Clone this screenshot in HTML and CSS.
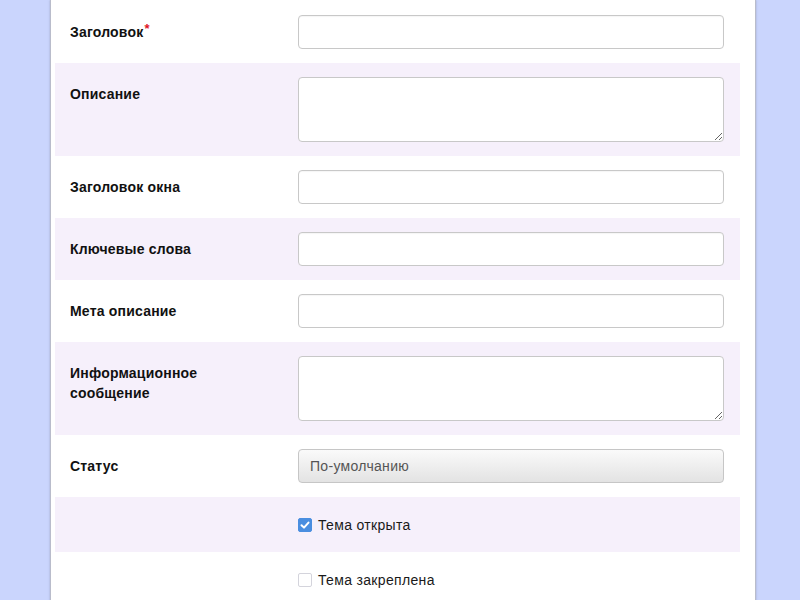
FILE: index.html
```html
<!DOCTYPE html>
<html lang="ru">
<head>
<meta charset="utf-8">
<link rel="stylesheet" href="styles.css">
</head>
<body>
<div class="page">
  <div class="panel">
    <form class="form">
      <div class="row">
        <div class="label">Заголовок<span class="req">*</span></div>
        <div class="field"><input class="input" type="text"></div>
      </div>
      <div class="row alt">
        <div class="label">Описание</div>
        <div class="field"><textarea class="textarea"></textarea></div>
      </div>
      <div class="row">
        <div class="label">Заголовок окна</div>
        <div class="field"><input class="input" type="text"></div>
      </div>
      <div class="row alt">
        <div class="label">Ключевые слова</div>
        <div class="field"><input class="input" type="text"></div>
      </div>
      <div class="row">
        <div class="label">Мета описание</div>
        <div class="field"><input class="input" type="text"></div>
      </div>
      <div class="row alt">
        <div class="label">Информационное<br>сообщение</div>
        <div class="field"><textarea class="textarea"></textarea></div>
      </div>
      <div class="row">
        <div class="label">Статус</div>
        <div class="field"><div class="select">По-умолчанию</div></div>
      </div>
      <div class="row alt check-row">
        <div class="label"></div>
        <div class="field">
          <label class="check"><span class="box checked"><svg viewBox="0 0 14 14" width="14" height="14"><path d="M3.5 7.2 L6 9.6 L10.5 4.6" fill="none" stroke="#fff" stroke-width="2" stroke-linecap="round" stroke-linejoin="round"/></svg></span>Тема открыта</label>
        </div>
      </div>
      <div class="row check-row">
        <div class="label"></div>
        <div class="field">
          <label class="check"><span class="box"></span>Тема закреплена</label>
        </div>
      </div>
    </form>
  </div>
</div>
</body>
</html>
```
FILE: styles.css
```css
* { box-sizing: border-box; }
html, body {
  margin: 0;
  padding: 0;
  height: 100%;
  overflow: hidden;
}
body {
  background: #cad5fd;
  font-family: "Liberation Sans", Arial, sans-serif;
  color: #111;
}
.page {
  display: flex;
  justify-content: flex-start;
  padding-left: 50px;
}
.panel {
  width: 706px;
  min-height: 600px;
  background: #fff;
  border-left: 1px solid #b9bccb;
  border-right: 1px solid #b9bccb;
  box-shadow: 0 0 2px rgba(120, 125, 150, 0.5);
  padding: 1px 15px 0 4px;
}
.form {
  display: flex;
  flex-direction: column;
}
.row {
  display: flex;
  align-items: flex-start;
  padding: 14px 15px;
}
.row.alt { background: #f6f0fb; }
.label {
  width: 228px;
  flex: none;
  font-size: 14px;
  font-weight: bold;
  line-height: 20px;
  padding-top: 7px;
  color: #111;
  letter-spacing: 0.2px;
}
.req {
  color: #e0141e;
  font-size: 13px;
  line-height: 0;
  vertical-align: 4px;
  margin-left: 1px;
}
.field { flex: 1; }
.input {
  display: block;
  width: 426px;
  height: 34px;
  border: 1px solid #c8c8c8;
  border-radius: 4px;
  background: #fff;
  box-shadow: inset 0 1px 1px rgba(0,0,0,0.04);
  margin: 0;
}
.textarea {
  display: block;
  width: 426px;
  height: 65px;
  border: 1px solid #c8c8c8;
  border-radius: 4px;
  background: #fff;
  margin: 0;
  resize: vertical;
}
.select {
  width: 426px;
  height: 34px;
  border: 1px solid #c6c6c6;
  border-radius: 4px;
  background: linear-gradient(#fafafa, #e3e3e3);
  color: #555;
  font-size: 14px;
  line-height: 32px;
  padding-left: 11px;
  letter-spacing: 0.3px;
}
.check-row { padding: 20px 15px 19px; }
.check-row .label { padding-top: 0; height: 16px; }
.check {
  display: flex;
  align-items: center;
  font-size: 14px;
  color: #1a1a1a;
  line-height: 16px;
  letter-spacing: 0.33px;
}
.box {
  width: 14px;
  height: 14px;
  border: 1px solid #d4d4dc;
  border-radius: 2px;
  background: #fff;
  margin-right: 6px;
  display: inline-flex;
  flex: none;
}
.box.checked {
  background: #4a8ee0;
  border-color: #4a8ee0;
}
.box svg { display: block; margin: -1px; }
```
